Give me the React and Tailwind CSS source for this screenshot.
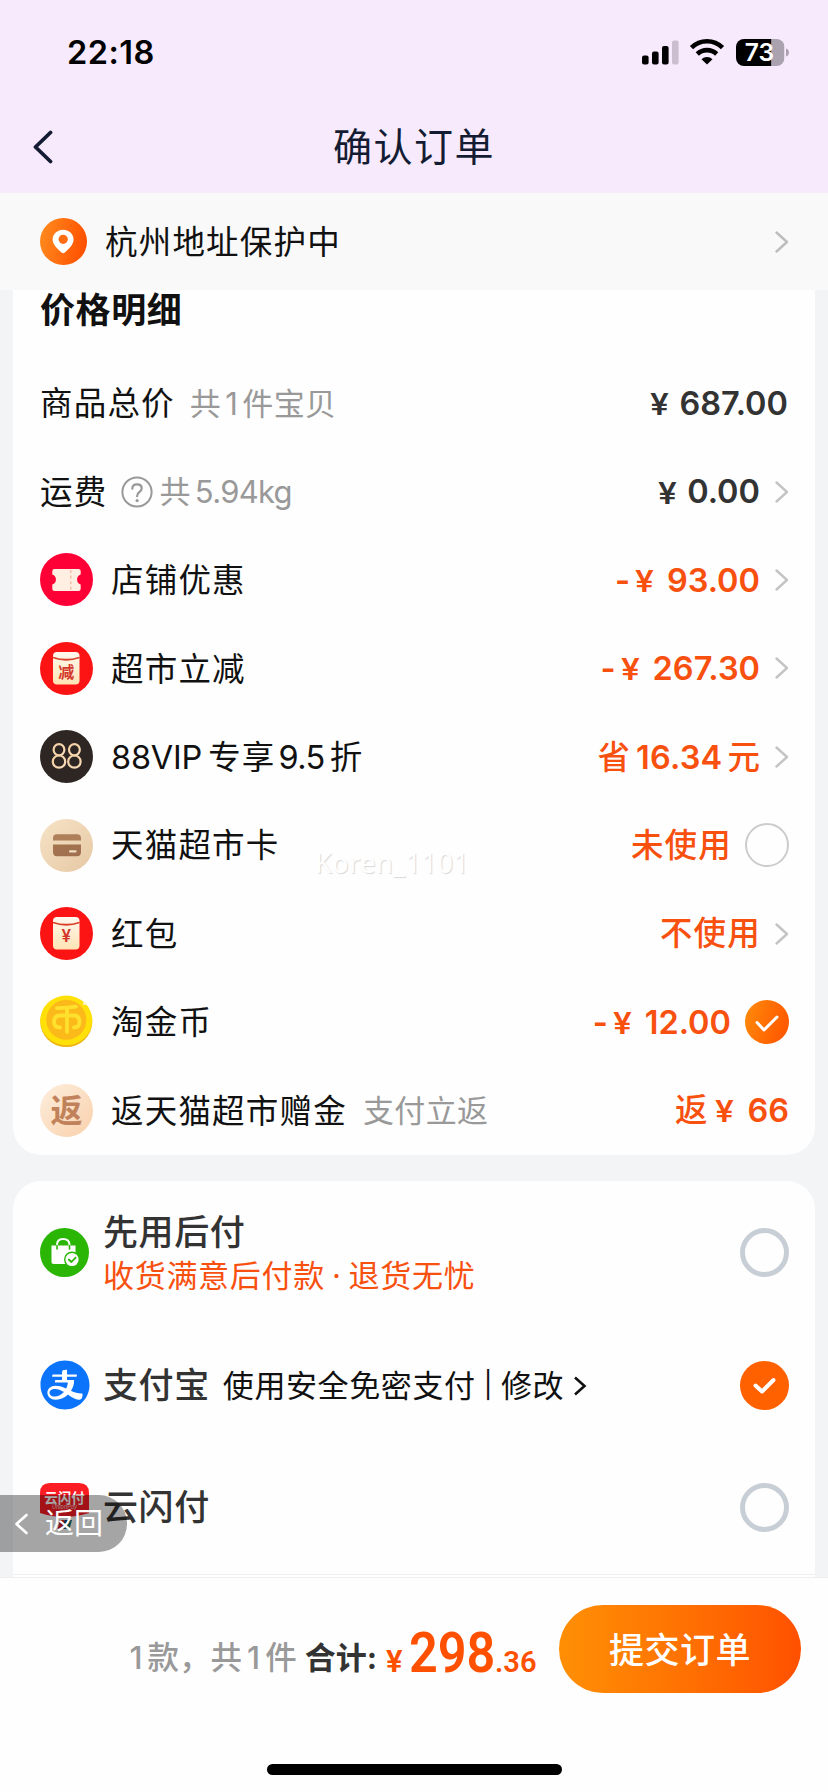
import React from 'react';
import { AiFillAlipayCircle } from 'react-icons/ai';

function Chevron({ className = 'text-[#bdbdbd]' }) {
  return (
    <svg width="15" height="24" viewBox="0 0 15 24" fill="none" className={`shrink-0 ${className}`}>
      <path d="M2.5 2.5 L13 12 L2.5 21.5" stroke="currentColor" strokeWidth="2.4" strokeLinecap="round" strokeLinejoin="round" />
    </svg>
  );
}

function StatusBar() {
  return (
    <div className="h-[104px] flex justify-between pl-[67px] pr-[37px]">
      <span className="mt-[37px] h-8 leading-8 text-[32.5px] font-semibold tracking-[0.5px] text-black">22:18</span>
      <svg width="149" height="36" viewBox="0 -4 149 36" className="mt-[35px]">
        <rect x="0" y="16.5" width="6.6" height="9" rx="2" fill="#000" />
        <rect x="10" y="12.5" width="6.6" height="13" rx="2" fill="#000" />
        <rect x="20" y="7" width="6.6" height="18.5" rx="2" fill="#000" />
        <rect x="30" y="1.5" width="6.6" height="24" rx="2" fill="#c9bfce" />
        <path d="M49.5 8.6 A22 22 0 0 1 80.5 8.6" fill="none" stroke="#000" strokeWidth="4.6" />
        <path d="M55.3 15 A14 14 0 0 1 74.7 15" fill="none" stroke="#000" strokeWidth="4.6" />
        <path d="M59.5 20.2 A8.2 8.2 0 0 1 70.5 20.2 L65 25.6 Z" fill="#000" />
        <clipPath id="battery">
          <rect x="94" y="0" width="48.5" height="27" rx="8" />
        </clipPath>
        <g clipPath="url(#battery)">
          <rect x="94" y="0" width="35.5" height="27" fill="#000" />
          <rect x="129.5" y="0" width="13" height="27" fill="#aaa2ae" />
        </g>
        <path d="M144 9.5 A4.2 4.2 0 0 1 144 17.5 Z" fill="#aaa2ae" />
        <text x="117.5" y="22.3" textAnchor="middle" fontSize="24.5" fontWeight="600" fill="#fff">73</text>
      </svg>
    </div>
  );
}

function LocationIcon() {
  return (
    <svg width="47" height="47" viewBox="0 0 47 47">
      <defs>
        <linearGradient id="loc" x1="0" y1="0.3" x2="1" y2="0.5">
          <stop offset="0" stopColor="#ff8a1e" />
          <stop offset="1" stopColor="#ff5000" />
        </linearGradient>
      </defs>
      <circle cx="23.5" cy="23.5" r="23.5" fill="url(#loc)" />
      <path d="M23.2 11.8 C29 11.8 33.6 16 33.6 21.6 C33.6 27 28.6 31 24.8 34.6 Q23.2 36 21.6 34.6 C17.8 31 12.6 27 12.6 21.6 C12.6 16 17.4 11.8 23.2 11.8 Z" fill="#fff" />
      <circle cx="23.2" cy="21.3" r="4.6" fill="#ff6d12" />
    </svg>
  );
}

function CouponIcon() {
  return (
    <svg width="53" height="53" viewBox="0 0 53 53">
      <circle cx="26.5" cy="26.5" r="26.5" fill="#ff0036" />
      <path d="M14.5 16 H38.5 Q40.7 16 40.7 18.2 V21.4 A5.4 5.4 0 0 0 40.7 31.6 V35.8 Q40.7 38 38.5 38 H14.5 Q12.3 38 12.3 35.8 V31.6 A5.4 5.4 0 0 0 12.3 21.4 V18.2 Q12.3 16 14.5 16 Z" fill="#ffeee2" />
      <path d="M30.8 17 V38" stroke="#f7b9a8" strokeWidth="1.4" strokeDasharray="3 2.6" />
    </svg>
  );
}

function PacketIcon({ label, size, color }) {
  return (
    <svg width="53" height="53" viewBox="0 0 53 53">
      <defs>
        <linearGradient id="packet" x1="0" y1="0" x2="0" y2="1">
          <stop offset="0" stopColor="#fff8ee" />
          <stop offset="1" stopColor="#ffe3b4" />
        </linearGradient>
      </defs>
      <circle cx="26.5" cy="26.5" r="26.5" fill={color} />
      <rect x="13" y="10" width="26.5" height="32.5" rx="4" fill="url(#packet)" />
      <path d="M13 15.5 Q26.2 20 39.5 15.5" fill="none" stroke="#d8402a" strokeWidth="1.8" />
      <text x="26.3" y={label === '减' ? 35.5 : 34.5} textAnchor="middle" fontSize={size} fontWeight="600" fill="#d3362b">{label}</text>
    </svg>
  );
}

function VipIcon() {
  return (
    <svg width="53" height="53" viewBox="0 0 53 53">
      <defs>
        <linearGradient id="vip" x1="0" y1="0" x2="1" y2="1">
          <stop offset="0" stopColor="#f3cfa2" />
          <stop offset="1" stopColor="#f8dcb8" />
        </linearGradient>
      </defs>
      <circle cx="26.5" cy="26.5" r="26.5" fill="#2e2622" />
      <g fill="none" stroke="url(#vip)" strokeWidth="2.2">
        <ellipse cx="19" cy="19.8" rx="5.4" ry="5.6" />
        <ellipse cx="19" cy="31.6" rx="6.2" ry="6.1" />
        <ellipse cx="34.4" cy="19.8" rx="5.4" ry="5.6" />
        <ellipse cx="34.4" cy="31.6" rx="6.2" ry="6.1" />
      </g>
    </svg>
  );
}

function CardIcon() {
  return (
    <svg width="53" height="53" viewBox="0 0 53 53">
      <defs>
        <linearGradient id="cardBg" x1="0" y1="0" x2="1" y2="1">
          <stop offset="0" stopColor="#f6e3c6" />
          <stop offset="1" stopColor="#e6c8a4" />
        </linearGradient>
        <linearGradient id="cardFg" x1="0" y1="0" x2="1" y2="1">
          <stop offset="0" stopColor="#a4754e" />
          <stop offset="1" stopColor="#a06e50" />
        </linearGradient>
      </defs>
      <circle cx="26.5" cy="26.5" r="26.5" fill="url(#cardBg)" />
      <path d="M13 21.5 V19 Q13 15.2 17 15.2 H37 Q41 15.2 41 19 V21.5 Z" fill="#ae7f58" />
      <path d="M13 25.5 H41 V33 Q41 37.2 37 37.2 H17 Q13 37.2 13 33 Z" fill="url(#cardFg)" />
      <rect x="29" y="31.3" width="7.6" height="2.2" rx="1" fill="#f2dcc0" />
    </svg>
  );
}

function CoinIcon() {
  return (
    <svg width="53" height="53" viewBox="0 0 53 53">
      <ellipse cx="26.3" cy="26.9" rx="26" ry="25.2" fill="#efb612" />
      <ellipse cx="26.3" cy="25.4" rx="26" ry="24.8" fill="#ffe009" />
      <circle cx="26.3" cy="24.8" r="20" fill="#fbb91a" />
      <g fill="none" stroke="#ffe02c" strokeWidth="3.8" strokeLinecap="round" strokeLinejoin="round">
        <path d="M17 13.2 Q28 13 36 11.6" />
        <path d="M27 13.5 V37" />
        <path d="M20 32.5 Q14 32.5 14 27 Q14 20.5 20.5 20.5 H33.5 Q39.5 20.5 39.5 27 Q39.5 32.5 34 32.5" />
      </g>
      <circle cx="44.5" cy="8.5" r="1.6" fill="#fff6c8" />
    </svg>
  );
}

function RebateIcon() {
  return (
    <svg width="53" height="53" viewBox="0 0 53 53">
      <defs>
        <linearGradient id="rebate" x1="0" y1="0" x2="1" y2="1">
          <stop offset="0" stopColor="#fdeedd" />
          <stop offset="1" stopColor="#f9d0ab" />
        </linearGradient>
      </defs>
      <circle cx="26.5" cy="26.5" r="26.5" fill="url(#rebate)" />
      <text x="26.5" y="38" textAnchor="middle" fontSize="32" fontWeight="700" fill="#c1815a">返</text>
    </svg>
  );
}

function BagIcon() {
  return (
    <svg width="49" height="49" viewBox="0 0 49 49">
      <circle cx="24.5" cy="24.5" r="24.5" fill="#2bb606" />
      <path d="M11.5 17.5 H35.5 V36 H13.5 Q11.5 36 11.5 34 Z" fill="#fff" />
      <path d="M17 21 V17 Q17 11 23 11 Q29.5 11 29.5 17 V21" fill="none" stroke="#fff" strokeWidth="2" />
      <path d="M17 17.5 V21 M29.5 17.5 V21" stroke="#2bb606" strokeWidth="1.6" strokeLinecap="round" />
      <circle cx="32" cy="31.5" r="8" fill="#2bb606" />
      <circle cx="32" cy="31.5" r="6.6" fill="#fff" />
      <path d="M28.8 31.5 L31.4 34 L35.6 29.6" fill="none" stroke="#2bb606" strokeWidth="1.8" strokeLinecap="round" strokeLinejoin="round" />
    </svg>
  );
}

function UnionIcon() {
  return (
    <svg width="49" height="49" viewBox="0 0 49 49">
      <path d="M0 10 Q0 0 10 0 H39 Q49 0 49 10 V30 Q36 34 24.5 34 Q12 34 0 30 Z" fill="#fb1c24" />
      <text x="24.5" y="19.5" textAnchor="middle" fontSize="13.5" fontWeight="700" fill="#fff">云闪付</text>
      <text x="24.5" y="25.5" textAnchor="middle" fontSize="5.5" fontStyle="italic" fill="#ffd5d5">UnionPay</text>
      <path d="M20 37 H24.5 L22 46 H17.5 Z" fill="#d1232a" />
      <path d="M24.5 37 H28 L25.5 46 H22 Z" fill="#14386b" />
      <path d="M28 37 H32 L29.5 46 H25.5 Z" fill="#0b6f76" />
    </svg>
  );
}

function CheckCircle() {
  return (
    <svg width="44" height="44" viewBox="0 0 44 44" className="shrink-0">
      <defs>
        <linearGradient id="check" x1="0" y1="0" x2="1" y2="0.3">
          <stop offset="0" stopColor="#ff8c0a" />
          <stop offset="1" stopColor="#ff5a00" />
        </linearGradient>
      </defs>
      <circle cx="22" cy="22" r="22" fill="url(#check)" />
      <path d="M12 22.5 L19 30 L32 17" fill="none" stroke="#fff" strokeWidth="3" strokeLinecap="round" strokeLinejoin="round" />
    </svg>
  );
}

function Radio({ checked }) {
  if (!checked) {
    return <span className="w-[49px] h-[49px] shrink-0 rounded-full border-[5px] border-[#c8ced6]"></span>;
  }
  return (
    <svg width="49" height="49" viewBox="0 0 49 49" className="shrink-0">
      <circle cx="24.5" cy="24.5" r="24.5" fill="#ff6000" />
      <path d="M15.5 24.5 L22 30.5 L33.5 19" fill="none" stroke="#fff" strokeWidth="4" strokeLinecap="round" strokeLinejoin="round" />
    </svg>
  );
}

// sign / yen mark / digits are spaced separately
function Money({ prefix, value, wide = true }) {
  return (
    <span className="flex items-center">
      {prefix}
      <span className="text-[32px] w-[19px] flex justify-center font-medium font-[Roboto,sans-serif]">
        <span className="scale-x-[1.08]">¥</span>
      </span>
      <span className={wide ? 'ml-[13px]' : 'ml-[10px]'}>{value}</span>
    </span>
  );
}

const minus = <span className="mr-[8px] w-[12px] text-center">-</span>;

const rows = [
  {
    name: '商品总价',
    note: <><span>共</span><span className="mx-[4px]">1</span><span>件宝贝</span></>,
    noteClass: 'ml-[15px]',
    value: <span className="mr-[1px]"><Money value="687.00" wide={false} /></span>,
    dark: true,
  },
  {
    name: '运费',
    note: (
      <>
        <svg width="32" height="32" viewBox="0 0 32 32" className="mr-[6px]">
          <circle cx="16" cy="16" r="14.6" fill="none" stroke="#999" strokeWidth="2" />
          <path d="M11.3 12.6 Q11.5 8.3 16 8.3 Q20.7 8.3 20.7 12.3 Q20.7 14.6 18.2 16.2 Q16.1 17.6 16.1 20.2" fill="none" stroke="#999" strokeWidth="2.2" strokeLinecap="round" />
          <circle cx="16.1" cy="24.6" r="1.6" fill="#999" />
        </svg>
        <span>共</span><span className="ml-[4px] tracking-[-0.7px]">5.94kg</span>
      </>
    ),
    noteClass: 'ml-[14px]',
    value: <Money value="0.00" wide={false} />,
    dark: true,
    arrow: true,
  },
  { icon: <CouponIcon />, name: '店铺优惠', value: <Money prefix={minus} value="93.00" />, arrow: true },
  { icon: <PacketIcon label="减" size="16" color="#fc1414" />, name: '超市立减', value: <Money prefix={minus} value="267.30" />, arrow: true },
  {
    icon: <VipIcon />,
    name: <><span className="tracking-[-0.2px]">88VIP</span><span className="ml-[6px]">专享</span><span className="ml-[3px] mr-[5px] tracking-[-0.6px]">9.5</span><span>折</span></>,
    value: <><span className="font-medium">省</span><span className="ml-[6px] mr-[5px] tracking-[0.2px]">16.34</span><span className="font-medium">元</span></>,
    arrow: true,
  },
  { icon: <CardIcon />, name: '天猫超市卡', value: <span className="font-medium tracking-[1.2px] mr-[-1px]">未使用</span>, radio: true },
  { icon: <PacketIcon label="¥" size="17" color="#fc1414" />, name: '红包', value: <span className="font-medium tracking-[1.2px] mr-[-1px]">不使用</span>, arrow: true },
  { icon: <CoinIcon />, name: '淘金币', value: <Money prefix={minus} value="12.00" />, radio: true, checked: true },
  {
    icon: <RebateIcon />,
    name: '返天猫超市赠金',
    note: '支付立返',
    noteClass: 'ml-[16px]',
    value: <Money prefix={<span className="mr-[8px] font-medium">返</span>} value="66" />,
  },
];

function PriceRow({ row }) {
  return (
    <div className="h-[88.4px] flex items-center text-[32.5px] leading-none text-[#111]">
      {row.icon && <span className="mr-[18px] shrink-0">{row.icon}</span>}
      <span className="flex items-center mt-[3px] tracking-[1.2px]">{row.name}</span>
      {row.note && (
        <span className={`flex items-center text-[31px] tracking-[0.4px] text-[#999] ${row.noteClass}`}>{row.note}</span>
      )}
      <span className={`ml-auto mt-[2px] flex items-center font-semibold ${row.dark ? 'text-[#333]' : 'text-[#f8500f]'}`}>
        {row.value}
      </span>
      {row.arrow && <Chevron className="ml-[14px] text-[#c4c4c4]" />}
      {row.radio && !row.checked && <span className="ml-[14px] w-11 h-11 rounded-full border-2 border-[#ccc]"></span>}
      {row.radio && row.checked && <span className="ml-[14px]"><CheckCircle /></span>}
    </div>
  );
}

function PaymentCard() {
  return (
    <section className="h-[394px] bg-[#fefefe] rounded-t-[28px] mx-[13px] px-[27px] pr-[26px] leading-none border-b border-[#eee]">
      <div className="h-[143px] flex items-center">
        <BagIcon />
        <div className="ml-[14px] mt-[4px]">
          <div className="text-[35px] h-[44px] leading-[44px] font-medium tracking-[0.6px] text-[#333]">先用后付</div>
          <div className="text-[31px] h-[44px] leading-[44px] tracking-[0.7px] [word-spacing:-2.4px] text-[#f8500f]">收货满意后付款 · 退货无忧</div>
        </div>
        <span className="ml-auto flex"><Radio /></span>
      </div>
      <div className="h-[123px] flex items-center">
        <span className="w-[49px] h-[49px] rounded-full bg-white flex items-center justify-center shrink-0">
          <AiFillAlipayCircle size={56} color="#0c73fb" className="shrink-0" />
        </span>
        <span className="ml-[14px] text-[35px] font-medium tracking-[0.6px] text-[#333]">支付宝</span>
        <span className="ml-[13px] flex items-center text-[31px] tracking-[0.6px] text-[#111]">
          使用安全免密支付<span className="mx-[8px] text-[26px]">|</span>修改
        </span>
        <svg width="14" height="22" viewBox="0 0 14 22" className="ml-[9px] mt-[2px]" fill="none">
          <path d="M2 2.5 L11.5 11 L2 19.5" stroke="#111" strokeWidth="2.6" />
        </svg>
        <span className="ml-auto flex"><Radio checked /></span>
      </div>
      <div className="h-[121px] flex items-center">
        <UnionIcon />
        <span className="ml-[14px] text-[35px] font-medium tracking-[0.6px] text-[#333]">云闪付</span>
        <span className="ml-auto flex"><Radio /></span>
      </div>
    </section>
  );
}

function SubmitBar() {
  return (
    <footer className="h-[215px] bg-[#fefefe] border-t border-[#eee] flex flex-col items-center">
      <div className="w-full h-[88px] mt-[27px] pr-[27px] flex items-center justify-end leading-none">
        <div className="flex items-baseline mt-[9px]">
          <span className="text-[31.5px] font-medium text-[#999] flex -translate-y-[3px]">
            <span>1</span><span className="ml-[5px]">款，共</span><span className="mx-[5px]">1</span><span>件</span>
          </span>
          <span className="ml-[8px] text-[31px] font-bold text-[#333] -translate-y-[3px]">合计:</span>
          <span className="ml-[9px] w-[18px] text-[31px] font-semibold text-[#ff5000] font-[Roboto]">¥</span>
          <span className="ml-[5px] w-[86px] text-[56px] font-semibold text-[#ff5000] font-[Roboto]">
            <span className="inline-block origin-left scale-x-[0.9]">298</span>
          </span>
          <span className="w-[41px] text-[30px] font-semibold text-[#ff5000] font-[Roboto]">
            <span className="inline-block origin-left scale-x-[0.97]">.36</span>
          </span>
        </div>
        <button className="ml-[23px] w-[242px] h-[88px] pt-[3px] rounded-full bg-linear-to-r from-[#ff8f05] to-[#ff5000] text-[35px] font-medium tracking-[0.5px] text-white">
          提交订单
        </button>
      </div>
      <div className="mt-[71px] w-[295px] h-[11px] rounded-full bg-black"></div>
    </footer>
  );
}

export default function App() {
  return (
    <div className="relative w-[828px] h-[1792px] overflow-hidden bg-[#f2f4f6] font-[Inter,'Noto_Sans_CJK_SC',sans-serif]">
      <header className="h-[193px] bg-[#f7eafc]">
        <StatusBar />
        <div className="h-[89px] grid grid-cols-3 items-start px-[32px]">
          <svg width="22" height="34" viewBox="0 0 22 34" fill="none" className="mt-[26px]">
            <path d="M18.5 2.5 L3.5 17 L18.5 31.5" stroke="#141c33" strokeWidth="3.8" strokeLinecap="round" strokeLinejoin="round" />
          </svg>
          <h1 className="mt-[23px] text-center whitespace-nowrap text-[39px] leading-[40px] tracking-[1.5px] text-[#141c33]">确认订单</h1>
        </div>
      </header>

      <div className="h-[97px] bg-[#f9f9f9] flex items-center pl-[40px] pr-[39px]">
        <LocationIcon />
        <span className="ml-[18px] mt-[3px] text-[32.5px] leading-none tracking-[1.2px] text-[#111]">杭州地址保护中</span>
        <Chevron className="ml-auto text-[#bdbdbd]" />
      </div>

      <section className="mx-[13px] pl-[27px] pr-[26px] bg-[#fefefe] rounded-b-[28px]">
        <h2 className="h-[69px] pt-[2px] text-[35px] leading-[36px] font-bold tracking-[0.6px] text-[#111]">价格明细</h2>
        {rows.map((row, idx) => (
          <PriceRow key={idx} row={row} />
        ))}
      </section>

      <div className="h-[26px]"></div>
      <PaymentCard />
      <div className="h-[2px] mx-[13px] bg-white"></div>
      <SubmitBar />

      {/* floating overlays */}
      <div className="absolute left-[315px] top-[849px] text-[27px] leading-[28px] tracking-[0.5px] text-white font-['Noto_Sans'] [text-shadow:1px_1px_1px_#d8d8d8]">
        Koren_1101
      </div>
      <div className="absolute left-0 top-[1495px] w-[127px] h-[57px] rounded-r-[28px] bg-black/35 flex items-center pl-[14px] text-white">
        <svg width="15" height="22" viewBox="0 0 15 22" fill="none">
          <path d="M12.5 2 L2.5 11 L12.5 20" stroke="#fff" strokeWidth="2.6" strokeLinecap="round" strokeLinejoin="round" />
        </svg>
        <span className="ml-[16px] text-[29px] leading-none">返回</span>
      </div>
    </div>
  );
}
